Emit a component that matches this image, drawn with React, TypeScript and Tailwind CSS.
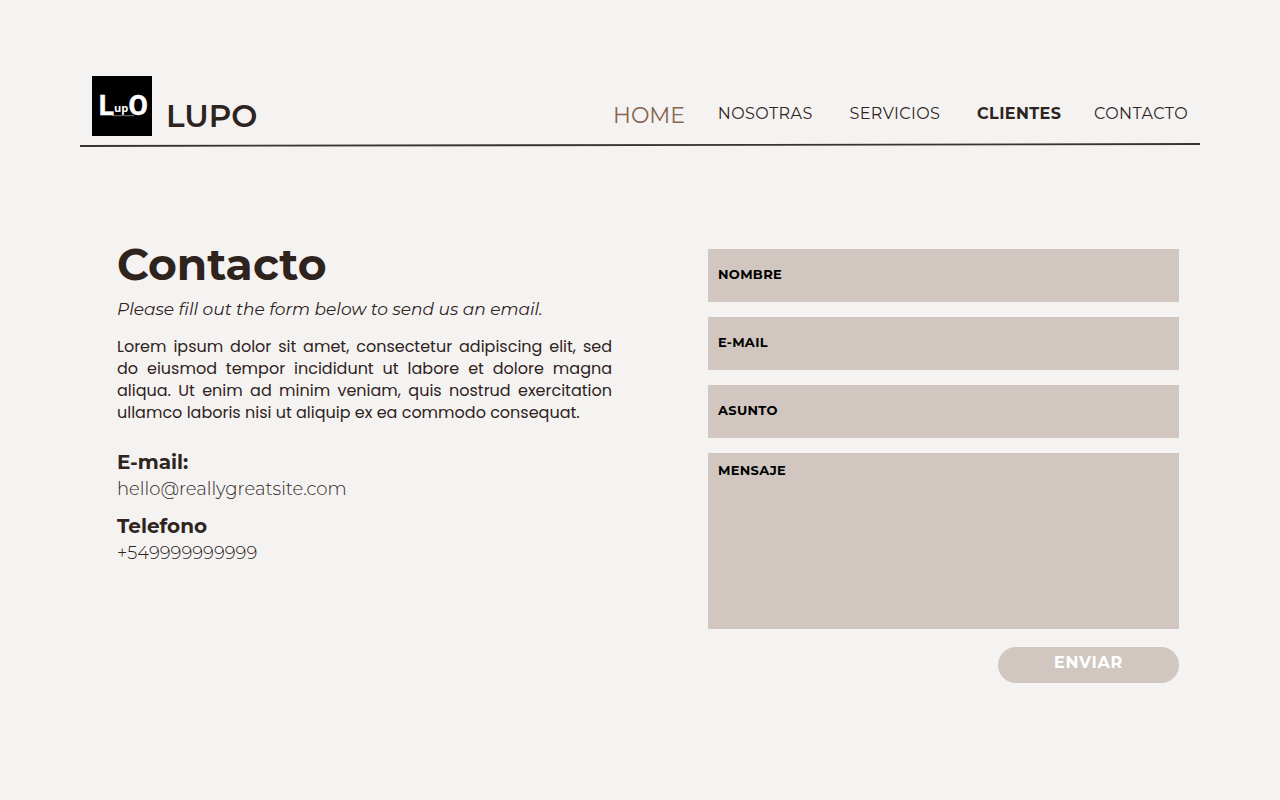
const links = [
  { label: 'HOME', style: 'text-[22px] leading-8 text-[#87644f]' },
  { label: 'NOSOTRAS', style: 'text-[16px] leading-7 tracking-wide' },
  { label: 'SERVICIOS', style: 'mx-1 text-[16px] leading-7 tracking-wide' },
  { label: 'CLIENTES', style: 'text-[16px] leading-7 font-bold tracking-wide' },
  { label: 'CONTACTO', style: 'text-[16px] leading-7 tracking-wide' },
];

const fields = [
  { id: 'nombre', label: 'NOMBRE', type: 'text' },
  { id: 'email', label: 'E-MAIL', type: 'email' },
  { id: 'asunto', label: 'ASUNTO', type: 'text' },
];

function Logo() {
  return (
    <svg viewBox="0 0 60 60" className="size-[60px] shrink-0" role="img" aria-label="Lupo">
      <rect width="60" height="60" fill="#000" />
      <g fill="#fff" fontFamily="Roboto, sans-serif" fontWeight="700">
        <text x="6.8" y="39.3" fontSize="28" stroke="#fff" strokeWidth="0.5">L</text>
        <text x="22" y="36.3" fontSize="11" fontFamily="'Open Sans', sans-serif">up</text>
        <text x="36.4" y="39.3" fontSize="28" stroke="#fff" strokeWidth="0.5">O</text>
      </g>
      <path d="M20 39.7H42" stroke="#aaa" strokeWidth="0.7" />
    </svg>
  );
}

function Header() {
  return (
    <header>
      <div className="flex items-center justify-between px-3">
        <a href="#inicio" className="flex items-center gap-[14px]">
          <Logo />
          <span className="pt-5 text-[31px] leading-10 font-semibold">LUPO</span>
        </a>
        <nav className="flex w-[575px] items-start justify-between pt-5">
          {links.map((link) => (
            <a key={link.label} href={`#${link.label.toLowerCase()}`} className={link.style}>
              {link.label}
            </a>
          ))}
        </nav>
      </div>
      <svg viewBox="0 0 1120 6" preserveAspectRatio="none" className="mt-[6px] block h-[6px] w-full" aria-hidden="true">
        <path d="M0 4L1120 2" stroke="#3a3330" strokeWidth="1.8" />
      </svg>
    </header>
  );
}

function ContactInfo() {
  return (
    <section>
      <h1 className="text-[44px] leading-[48px] font-bold">Contacto</h1>
      <p className="mt-[9px] text-[17px] leading-6 italic">
        Please fill out the form below to send us an email.
      </p>
      <p className="mt-[15px] text-justify font-['Poppins','Montserrat',sans-serif] text-[16px] leading-[22px]">
        Lorem ipsum dolor sit amet, consectetur adipiscing elit, sed do eiusmod tempor incididunt ut labore et
        dolore magna aliqua. Ut enim ad minim veniam, quis nostrud exercitation ullamco laboris nisi ut aliquip ex
        ea commodo consequat.
      </p>
      <h2 className="mt-6 text-[20px] leading-7 font-bold">E-mail:</h2>
      <a href="mailto:hello@reallygreatsite.com" className="block text-[18px] leading-[26px] font-light">
        hello@reallygreatsite.com
      </a>
      <h2 className="mt-[10px] text-[20px] leading-7 font-bold">Telefono</h2>
      <a href="tel:+549999999999" className="block text-[18px] leading-[26px] font-light">
        +549999999999
      </a>
    </section>
  );
}

function ContactForm() {
  return (
    <form className="flex flex-col gap-[15px] pt-[9px] text-[13px] font-bold tracking-wide text-black">
      {fields.map((field) => (
        <div key={field.id} className="flex h-[53px] items-center gap-3 bg-[#d1c7c0] px-[10px]">
          <label htmlFor={field.id} className="pb-[2px]">{field.label}</label>
          <input
            id={field.id}
            type={field.type}
            className="h-full min-w-0 flex-1 bg-transparent font-normal outline-none"
          />
        </div>
      ))}
      <div className="flex h-44 flex-col bg-[#d1c7c0] px-[10px] py-[7px]">
        <label htmlFor="mensaje" className="leading-5">MENSAJE</label>
        <textarea id="mensaje" className="flex-1 resize-none bg-transparent font-normal outline-none" />
      </div>
      <button
        type="button"
        className="mt-[3px] h-9 w-[181px] self-end rounded-full bg-[#d1c7c0] pb-1 text-[16px] font-bold tracking-wider text-white"
      >
        ENVIAR
      </button>
    </form>
  );
}

export default function App() {
  return (
    <div className="min-h-screen bg-[#f5f3f1] px-20 pt-[76px] pb-12 font-['Montserrat','Inter',sans-serif] text-[#2f231e]">
      <Header />
      <main className="mt-[92px] grid grid-cols-[495fr_471fr] gap-24 pr-[21px] pl-[37px]">
        <ContactInfo />
        <ContactForm />
      </main>
    </div>
  );
}
